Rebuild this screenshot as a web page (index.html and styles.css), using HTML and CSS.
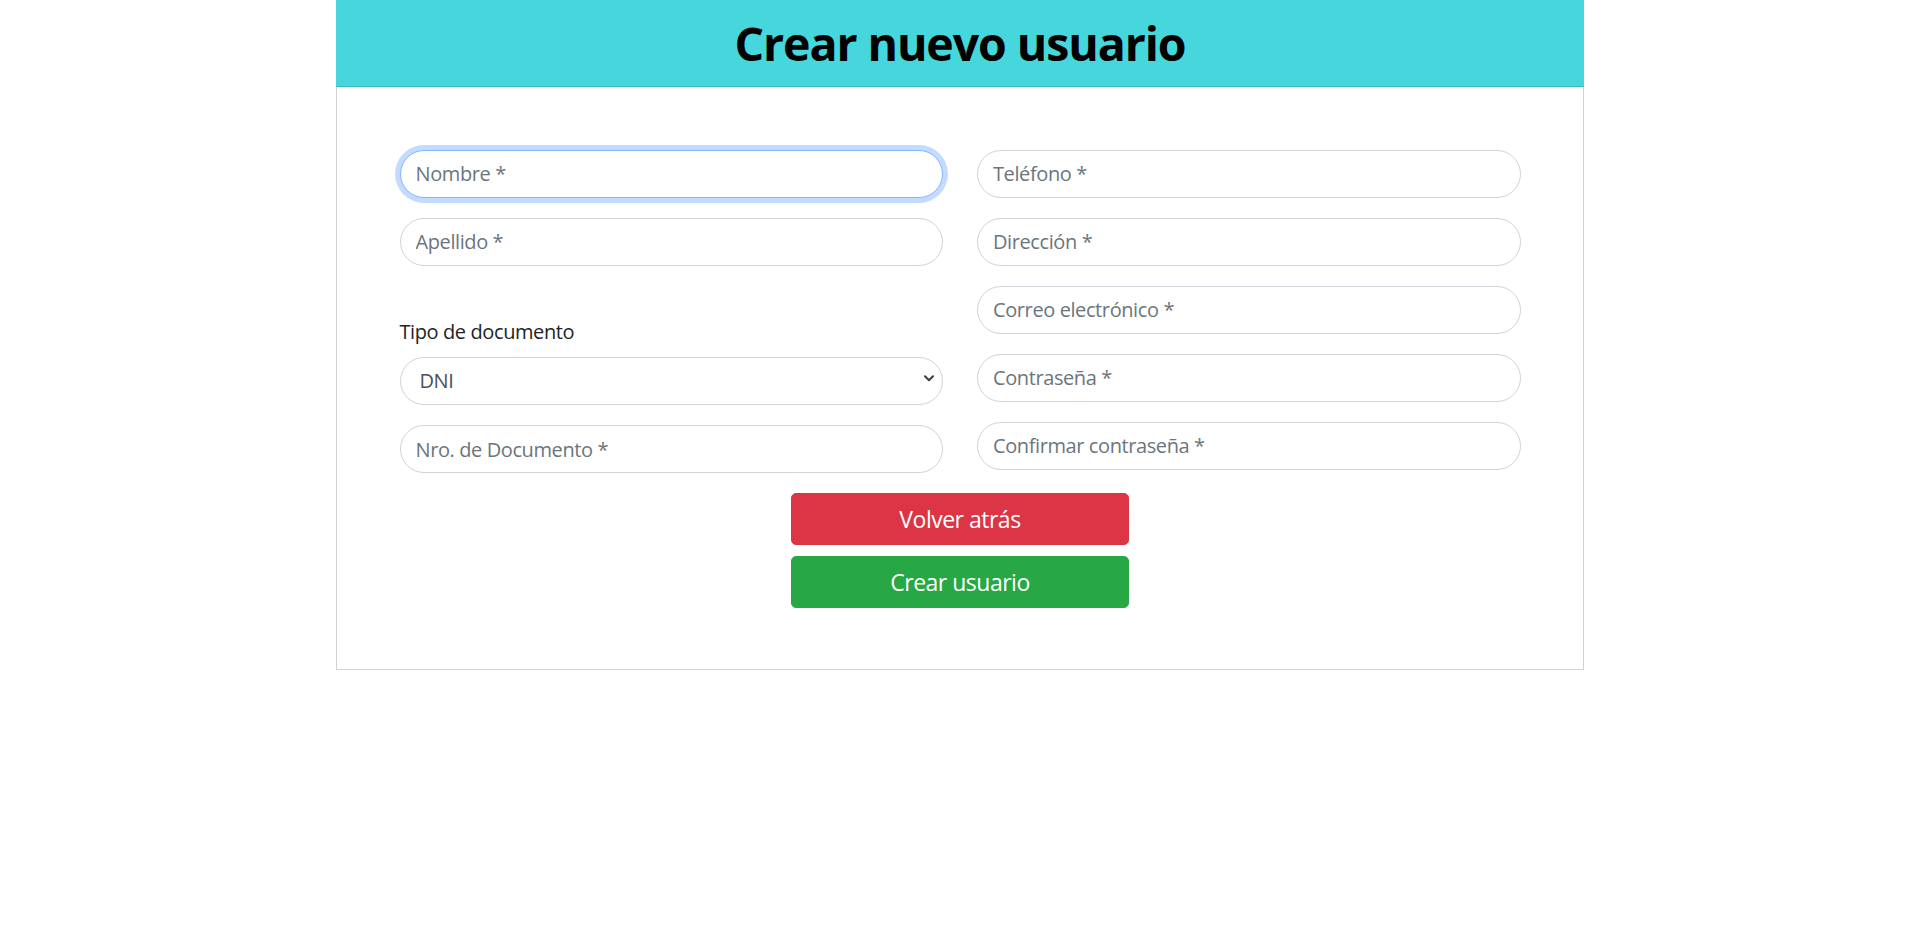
FILE: index.html
```html
<!DOCTYPE html>
<html lang="es">
<head>
<meta charset="utf-8">
<title>Crear nuevo usuario</title>
<link rel="stylesheet" href="styles.css">
</head>
<body>
<div class="card">
  <div class="card-header">
    <h1 class="title">Crear nuevo usuario</h1>
  </div>
  <div class="card-body">
    <form class="form">
      <div class="row">
        <div class="col">
          <input class="field focused" type="text" placeholder="Nombre *" autofocus>
          <input class="field" type="text" placeholder="Apellido *">
          <label class="label" for="tipo">Tipo de documento</label>
          <div class="select-wrap">
            <select class="field select" id="tipo">
              <option>DNI</option>
              <option>Pasaporte</option>
            </select>
            <svg class="chevron" width="10" height="7" viewBox="0 0 10 7"><path d="M1 1.2 L5 5.2 L9 1.2" fill="none" stroke="#3a3f44" stroke-width="2" stroke-linecap="round" stroke-linejoin="round"/></svg>
          </div>
          <input class="field" type="text" placeholder="Nro. de Documento *">
        </div>
        <div class="col">
          <input class="field" type="text" placeholder="Teléfono *">
          <input class="field" type="text" placeholder="Dirección *">
          <input class="field" type="text" placeholder="Correo electrónico *">
          <input class="field" type="password" placeholder="Contraseña *">
          <input class="field" type="password" placeholder="Confirmar contraseña *">
        </div>
      </div>
      <div class="actions">
        <button type="button" class="btn btn-danger">Volver atrás</button>
        <button type="submit" class="btn btn-success">Crear usuario</button>
      </div>
    </form>
  </div>
</div>
</body>
</html>
```
FILE: styles.css
```css
* { box-sizing: border-box; }

html, body {
  margin: 0;
  padding: 0;
  background: #ffffff;
}

body {
  font-family: "Open Sans", "Noto Sans", "Liberation Sans", sans-serif;
  font-size: 20px;
  color: #212529;
}

.card {
  width: 1248px;
  margin: 0 auto;
  border: 1px solid rgba(0, 0, 0, 0.18);
  border-top: none;
  background: #fff;
}

.card-header {
  height: 87px;
  margin: 0 -1px;
  background: #45d7db;
  border-bottom: 1px solid rgba(0, 0, 0, 0.12);
  display: flex;
  align-items: center;
  justify-content: center;
}

.title {
  margin: 0;
  font-size: 46.5px;
  font-weight: 700;
  letter-spacing: -1.1px;
  line-height: 1.2;
  color: #000;
  padding-top: 2px;
}

.card-body {
  padding: 62.5px 62.5px 61.5px;
}

.row {
  display: grid;
  grid-template-columns: 1fr 1fr;
  column-gap: 34px;
}

.col {
  display: flex;
  flex-direction: column;
}

.field {
  display: block;
  width: 100%;
  height: 48px;
  margin: 0 0 20px 0;
  padding: 7.5px 15px;
  font-family: inherit;
  font-size: 20px;
  letter-spacing: -0.4px;
  line-height: 30px;
  color: #495057;
  background: #fff;
  border: 1px solid #ced4da;
  border-radius: 999px;
  outline: none;
}

.field::placeholder {
  color: #6c757d;
  opacity: 1;
}

.field:focus,
.field.focused {
  border-color: #86b7fe;
  box-shadow: 0 0 0 5px rgba(13, 110, 253, 0.25);
  caret-color: #212529;
}

.label {
  display: block;
  margin-top: 31.5px;
  margin-bottom: 10px;
  line-height: 30px;
  font-size: 20px;
  letter-spacing: -0.4px;
  color: #212529;
}

.select-wrap {
  position: relative;
}

.select {
  appearance: none;
  -webkit-appearance: none;
  padding-left: 19px;
  color: #495057;
}

.chevron {
  position: absolute;
  right: 9px;
  top: 18px;
  pointer-events: none;
}

.actions {
  display: flex;
  flex-direction: column;
  align-items: center;
  gap: 11.5px;
}

.btn {
  width: 338px;
  padding: 7.5px 15px;
  font-family: inherit;
  font-size: 23px;
  letter-spacing: -0.5px;
  line-height: 34.5px;
  color: #fff;
  border: 1px solid transparent;
  border-radius: 5px;
  cursor: pointer;
}

.btn-danger {
  background: #dc3545;
  border-color: #dc3545;
}

.btn-success {
  background: #28a745;
  border-color: #28a745;
}
```
